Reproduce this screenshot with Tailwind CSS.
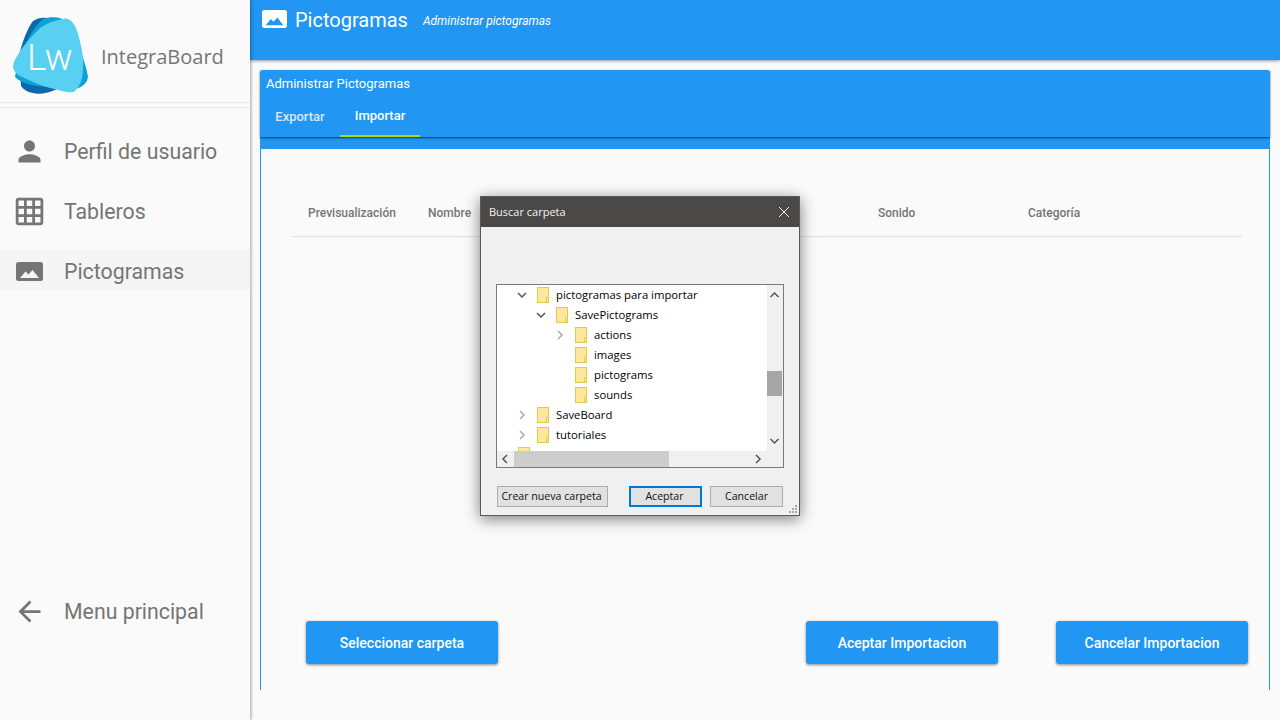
<!DOCTYPE html>
<html lang="es">
<head>
<meta charset="UTF-8">
<title>IntegraBoard</title>
<script src="https://cdn.jsdelivr.net/npm/@tailwindcss/browser@4"></script>
</head>
<body class="relative flex h-[720px] w-[1280px] overflow-hidden bg-[#fafafa] font-['Roboto',sans-serif]">

<!-- sidebar -->
<aside class="relative z-10 flex h-full w-[250px] shrink-0 flex-col bg-[#fafafa] text-[#757575] shadow-[1px_0_3px_rgba(0,0,0,0.35)]">
  <div class="flex h-[102px] items-center pl-[13px]">
    <svg class="mt-[9px] h-[78px] w-[76px] shrink-0" viewBox="0 0 76 78">
      <path d="M20 4 C24 1 30 0 34 1 L50 20 L44 72 C36 76 26 78 20 76 C14 75 10 72 8 69 L6 40 C8 28 14 12 20 4Z" fill="#0b68ad"/>
      <path d="M30 2 C38 -1 50 0 56 6 C64 24 73 46 75 60 C74 66 70 70 62 72 L40 70 C26 70 10 68 2 60 C6 40 16 14 30 2Z" fill="#0ba3d6"/>
      <path d="M50 2 C56 0 62 6 65 17 C68 28 71 40 70 50 C70 60 68 68 62 74 C58 77 50 74 37 71 C26 68 16 63 7 59 C0 55 -1 50 1 45 C6 34 14 24 27 11 C34 6 42 3 50 2Z" fill="#59cff1"/>
      <text x="14" y="53" fill="#fff" font-family="Roboto" font-weight="300" font-size="37">Lw</text>
    </svg>
    <span class="ml-[12px] mt-[11px] font-['Open_Sans',sans-serif] text-[20px] text-[#757575]">IntegraBoard</span>
  </div>
  <div class="h-[6px] border-y border-[#e6e8f0]"></div>
  <nav class="flex flex-1 flex-col pt-[22px] pb-[88px] text-[21.3px]">
    <a class="flex h-[40px] items-center">
      <svg class="ml-[13px] mt-[2px] h-[33px] w-[33px]" viewBox="0 0 24 24" fill="#757575"><path d="M12 12c2.21 0 4-1.79 4-4s-1.79-4-4-4-4 1.79-4 4 1.79 4 4 4zm0 2c-2.67 0-8 1.34-8 4v2h16v-2c0-2.66-5.33-4-8-4z"/></svg>
      <span class="ml-[18px] mt-[4px]">Perfil de usuario</span>
    </a>
    <a class="mt-[20px] flex h-[40px] items-center">
      <svg class="ml-[13px] mt-[2px] h-[33px] w-[33px]" viewBox="0 0 24 24" fill="#757575"><path d="M20 2H4c-1.1 0-2 .9-2 2v16c0 1.1.9 2 2 2h16c1.1 0 2-.9 2-2V4c0-1.1-.9-2-2-2zM8 20H4v-4h4v4zm0-6H4v-4h4v4zm0-6H4V4h4v4zm6 12h-4v-4h4v4zm0-6h-4v-4h4v4zm0-6h-4V4h4v4zm6 12h-4v-4h4v4zm0-6h-4v-4h4v4zm0-6h-4V4h4v4z"/></svg>
      <span class="ml-[18px] mt-[4px]">Tableros</span>
    </a>
    <a class="mt-[20px] flex h-[40px] items-center bg-[#f5f5f5]">
      <svg class="ml-[16px] mt-[2px] h-[19px] w-[27px]" viewBox="0 0 27 19" fill="#757575"><path fill-rule="evenodd" d="M2.5 0h22A2.5 2.5 0 0 1 27 2.5v14a2.5 2.5 0 0 1-2.5 2.5h-22A2.5 2.5 0 0 1 0 16.500v-14A2.500 2.500 0 0 1 2.500 0zM4 16h19l-6.500-8-4 4.500-3-3z"/></svg>
      <span class="ml-[21px] mt-[4px]">Pictogramas</span>
    </a>
    <a class="mt-auto flex h-[40px] items-center">
      <svg class="ml-[13px] -mt-[2px] h-[33px] w-[33px]" viewBox="0 0 24 24" fill="#757575"><path d="M20 11H7.830l5.590-5.590L12 4l-8 8 8 8 1.410-1.410L7.830 13H20v-2z"/></svg>
      <span class="ml-[18px]">Menu principal</span>
    </a>
  </nav>
</aside>

<!-- main -->
<main class="flex h-full min-w-0 flex-1 flex-col">
  <header class="flex h-[60px] shrink-0 items-start bg-[#2196f3] pl-[12px] pt-[5px] text-white shadow-[0_1px_3px_rgba(0,0,0,0.4)]">
    <svg class="mt-[5px] h-[18px] w-[25px] shrink-0" viewBox="0 0 27 19" preserveAspectRatio="none" fill="#fff"><path fill-rule="evenodd" d="M2.500 0h22A2.500 2.500 0 0 1 27 2.500v14a2.500 2.500 0 0 1-2.500 2.500h-22A2.500 2.500 0 0 1 0 16.500v-14A2.500 2.500 0 0 1 2.500 0zM4 16h19l-6.500-8-4 4.500-3-3z"/></svg>
    <h1 class="ml-[8px] mt-[1px] text-[20px] leading-[28px]">Pictogramas</h1>
    <span class="ml-[15px] mt-[2px] text-[12px] italic leading-[28px]">Administrar pictogramas</span>
  </header>

  <section class="mx-[10px] mt-[10px] flex h-[620px] flex-col rounded-t-[3px] border-x border-[#2196f3]">
    <div class="-mx-[1px] h-[79px] shrink-0 rounded-t-[3px] bg-[#2196f3] text-white">
      <div class="h-[67px] shadow-[0_1px_2px_rgba(0,0,0,0.6)]">
        <div class="h-[27px] pl-[6px] pt-[6px] text-[13px] leading-[16px]">Administrar Pictogramas</div>
        <div class="flex h-[40px] text-[13px] font-medium">
          <div class="flex w-[80px] items-center justify-center text-white/80">Exportar</div>
          <div class="flex w-[80px] items-center justify-center border-b-2 border-[#aedd00]">Importar</div>
        </div>
      </div>
    </div>
    <div class="ml-[31px] mr-[27px] mt-[44px] flex h-[44px] items-center border-b border-[#e0e0e0] pl-[16px] pb-[4px] text-[12px] font-medium text-[#757575]">
      <div class="w-[120px]">Previsualización</div>
      <div class="w-[450px]">Nombre</div>
      <div class="w-[150px]">Sonido</div>
      <div>Categoría</div>
    </div>
    <div class="mt-auto mb-[26px] flex pl-[45px] text-[14px] font-medium text-white">
      <button class="h-[43px] w-[192px] rounded-[3px] bg-[#2196f3] pt-[1px] shadow-[0_1px_3px_rgba(0,0,0,0.45)]">Seleccionar carpeta</button>
      <button class="ml-[308px] h-[43px] w-[192px] rounded-[3px] bg-[#2196f3] pt-[1px] shadow-[0_1px_3px_rgba(0,0,0,0.45)]">Aceptar Importacion</button>
      <button class="ml-[58px] h-[43px] w-[192px] rounded-[3px] bg-[#2196f3] pt-[1px] shadow-[0_1px_3px_rgba(0,0,0,0.45)]">Cancelar Importacion</button>
    </div>
  </section>
</main>

<!-- native folder dialog -->
<div class="absolute left-[480px] top-[196px] z-20 flex h-[320px] w-[320px] flex-col border border-[#5a5a5a] bg-[#f0f0f0] font-['Open_Sans',sans-serif] text-[11.3px] text-black shadow-[0_3px_14px_rgba(0,0,0,0.5)]">
  <div class="flex h-[30px] shrink-0 items-center justify-between bg-[#4a4947] pl-[8px] pr-[9px] text-[11px] text-[#f2f2f2]">
    <span>Buscar carpeta</span>
    <svg class="h-[12px] w-[12px]" viewBox="0 0 12 12" stroke="#eee" fill="none"><path d="M1 1l10 10M11 1L1 11"/></svg>
  </div>

  <div class="ml-[15px] mt-[57px] flex h-[184px] w-[288px] flex-col border border-[#7a7a7a] bg-white">
    <div class="flex h-[166px]">
      <ul class="h-[166px] w-[270px] overflow-hidden">
        <li class="flex h-[20px] items-center">
          <svg class="ml-[20px] h-[10px] w-[10px]" viewBox="0 0 10 10" fill="none" stroke="#555" stroke-width="1.5"><path d="M1 3l4 4 4-4"/></svg>
          <svg class="ml-[10px] h-[16px] w-[12px]" viewBox="0 0 12 16"><rect x=".5" y=".5" width="11" height="15" fill="#fde99c" stroke="#e9c64d"/><path d="M9.500 15.500v-5h2" fill="none" stroke="#e9c64d"/></svg>
          <span class="ml-[7px]">pictogramas para importar</span>
        </li>
        <li class="flex h-[20px] items-center">
          <svg class="ml-[39px] h-[10px] w-[10px]" viewBox="0 0 10 10" fill="none" stroke="#555" stroke-width="1.5"><path d="M1 3l4 4 4-4"/></svg>
          <svg class="ml-[10px] h-[16px] w-[12px]" viewBox="0 0 12 16"><rect x=".5" y=".5" width="11" height="15" fill="#fde99c" stroke="#e9c64d"/><path d="M9.500 15.500v-5h2" fill="none" stroke="#e9c64d"/></svg>
          <span class="ml-[7px]">SavePictograms</span>
        </li>
        <li class="flex h-[20px] items-center">
          <svg class="ml-[58px] h-[10px] w-[10px]" viewBox="0 0 10 10" fill="none" stroke="#aaa" stroke-width="1.5"><path d="M3 1l4 4-4 4"/></svg>
          <svg class="ml-[10px] h-[16px] w-[12px]" viewBox="0 0 12 16"><rect x=".5" y=".5" width="11" height="15" fill="#fde99c" stroke="#e9c64d"/><path d="M9.500 15.500v-5h2" fill="none" stroke="#e9c64d"/></svg>
          <span class="ml-[7px]">actions</span>
        </li>
        <li class="flex h-[20px] items-center pl-[78px]">
          <svg class="h-[16px] w-[12px]" viewBox="0 0 12 16"><rect x=".5" y=".5" width="11" height="15" fill="#fde99c" stroke="#e9c64d"/><path d="M9.500 15.500v-5h2" fill="none" stroke="#e9c64d"/></svg>
          <span class="ml-[7px]">images</span>
        </li>
        <li class="flex h-[20px] items-center pl-[78px]">
          <svg class="h-[16px] w-[12px]" viewBox="0 0 12 16"><rect x=".5" y=".5" width="11" height="15" fill="#fde99c" stroke="#e9c64d"/><path d="M9.500 15.500v-5h2" fill="none" stroke="#e9c64d"/></svg>
          <span class="ml-[7px]">pictograms</span>
        </li>
        <li class="flex h-[20px] items-center pl-[78px]">
          <svg class="h-[16px] w-[12px]" viewBox="0 0 12 16"><rect x=".5" y=".5" width="11" height="15" fill="#fde99c" stroke="#e9c64d"/><path d="M9.500 15.500v-5h2" fill="none" stroke="#e9c64d"/></svg>
          <span class="ml-[7px]">sounds</span>
        </li>
        <li class="flex h-[20px] items-center">
          <svg class="ml-[20px] h-[10px] w-[10px]" viewBox="0 0 10 10" fill="none" stroke="#aaa" stroke-width="1.5"><path d="M3 1l4 4-4 4"/></svg>
          <svg class="ml-[10px] h-[16px] w-[12px]" viewBox="0 0 12 16"><rect x=".5" y=".5" width="11" height="15" fill="#fde99c" stroke="#e9c64d"/><path d="M9.500 15.500v-5h2" fill="none" stroke="#e9c64d"/></svg>
          <span class="ml-[7px]">SaveBoard</span>
        </li>
        <li class="flex h-[20px] items-center">
          <svg class="ml-[20px] h-[10px] w-[10px]" viewBox="0 0 10 10" fill="none" stroke="#aaa" stroke-width="1.5"><path d="M3 1l4 4-4 4"/></svg>
          <svg class="ml-[10px] h-[16px] w-[12px]" viewBox="0 0 12 16"><rect x=".5" y=".5" width="11" height="15" fill="#fde99c" stroke="#e9c64d"/><path d="M9.500 15.500v-5h2" fill="none" stroke="#e9c64d"/></svg>
          <span class="ml-[7px]">tutoriales</span>
        </li>
        <li class="flex h-[20px] items-start pt-[2px] pl-[21px]">
          <svg class="h-[16px] w-[12px]" viewBox="0 0 12 16"><rect x=".5" y=".5" width="11" height="15" fill="#fde99c" stroke="#e9c64d"/></svg>
        </li>
      </ul>
      <div class="flex h-[166px] w-[16px] flex-col bg-[#f0f0f0]">
        <svg class="mt-[5px] h-[10px] w-[15px]" viewBox="0 0 15 10" fill="none" stroke="#555" stroke-width="1.5"><path d="M3.500 7l4-4 4 4"/></svg>
        <div class="mt-[71px] h-[25px] w-[15px] bg-[#a6a6a6]"></div>
        <svg class="mt-[40px] h-[10px] w-[15px]" viewBox="0 0 15 10" fill="none" stroke="#555" stroke-width="1.5"><path d="M3.500 3l4 4 4-4"/></svg>
      </div>
    </div>
    <div class="flex h-[16px] items-center bg-[#f0f0f0]">
      <svg class="h-[16px] w-[17px] shrink-0" viewBox="0 0 17 16" fill="none" stroke="#555" stroke-width="1.5"><path d="M10 4l-4 4 4 4"/></svg>
      <div class="h-[16px] w-[155px] bg-[#cdcdcd]"></div>
      <svg class="ml-[81px] h-[16px] w-[16px] shrink-0" viewBox="0 0 16 16" fill="none" stroke="#555" stroke-width="1.5"><path d="M6 4l4 4-4 4"/></svg>
    </div>
  </div>

  <div class="ml-[16px] mt-[18px] flex text-[10.6px] text-[#111]">
    <button class="h-[21px] w-[111px] border border-[#adadad] bg-[#e1e1e1] pt-[1px] pr-[2px]">Crear nueva carpeta</button>
    <button class="ml-[21px] h-[21px] w-[73px] border-2 border-[#0078d7] bg-[#e1e1e1] pt-[1px] pr-[2px]">Aceptar</button>
    <button class="ml-[8px] h-[21px] w-[73px] border border-[#adadad] bg-[#e1e1e1] pt-[1px]">Cancelar</button>
  </div>
  <svg class="absolute bottom-[1px] right-[1px] h-[10px] w-[10px]" viewBox="0 0 10 10" fill="#a8a8a8"><path d="M7 1h2v2H7zM4 4h2v2H4zM7 4h2v2H7zM1 7h2v2H1zM4 7h2v2H4zM7 7h2v2H7z"/></svg>
</div>
</body>
</html>
